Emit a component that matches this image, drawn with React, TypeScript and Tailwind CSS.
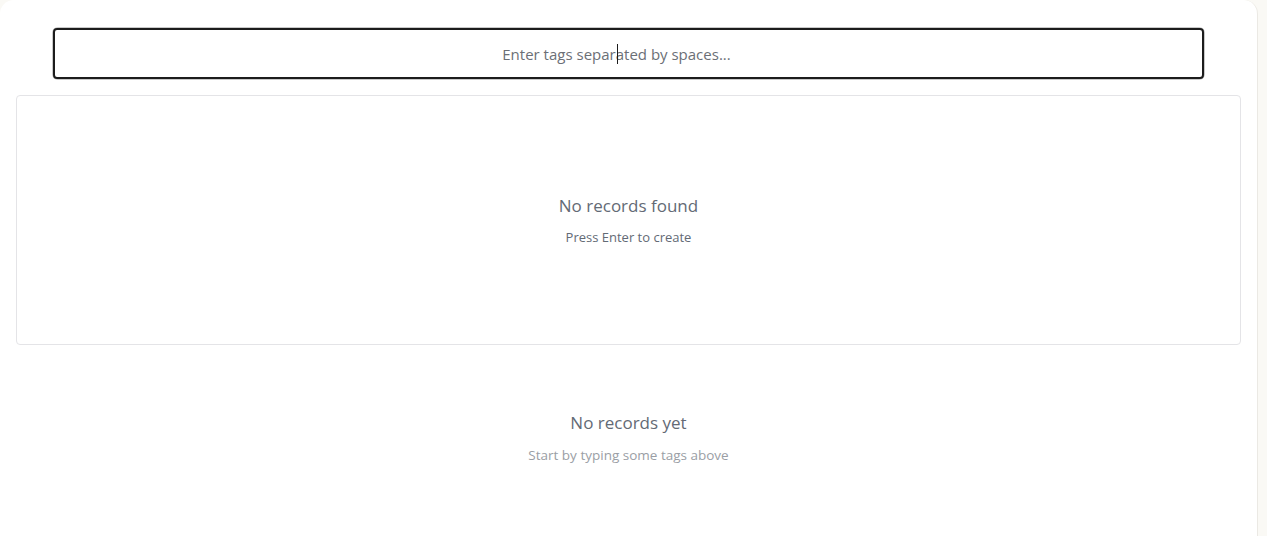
import React from 'react'

export default function App() {
  return (
    <div className="flex h-[536px] w-full bg-[#faf9f5] font-['Open_Sans','Noto_Sans',sans-serif]">
      <div className="flex h-full w-[1258px] flex-col rounded-t-[14px] border-r border-[#ebe9e4] bg-white px-4 pt-[28px]">
        <div className="relative mx-[37px] rounded-[5px] ring-1 ring-[#c9c9c9]">
          <input
            type="text"
            placeholder="Enter tags separated by spaces..."
            className="h-[51px] w-full rounded-[4px] border-2 border-[#1c1c1c] bg-white pl-3 pr-[36px] text-center text-[15px] text-gray-700 outline-none placeholder:text-[#6b6f76]"
          />
          {/* text caret */}
          <span className="pointer-events-none absolute left-[564px] top-[16px] h-[20px] w-px bg-[#1c1c1c]" />
        </div>

        <div className="mt-[16px] flex h-[250px] flex-col items-center justify-center rounded-[4px] border border-[#e4e4e7]">
          <p className="text-[17px] text-[#636a75]">No records found</p>
          <p className="mt-[10px] text-[13px] text-[#636a75]">Press Enter to create</p>
        </div>

        <div className="mt-[65px] flex flex-col items-center">
          <p className="text-[17px] text-[#636a75]">No records yet</p>
          <p className="mt-[9px] text-[13.5px] text-[#9a9ea5]">Start by typing some tags above</p>
        </div>
      </div>
    </div>
  )
}
